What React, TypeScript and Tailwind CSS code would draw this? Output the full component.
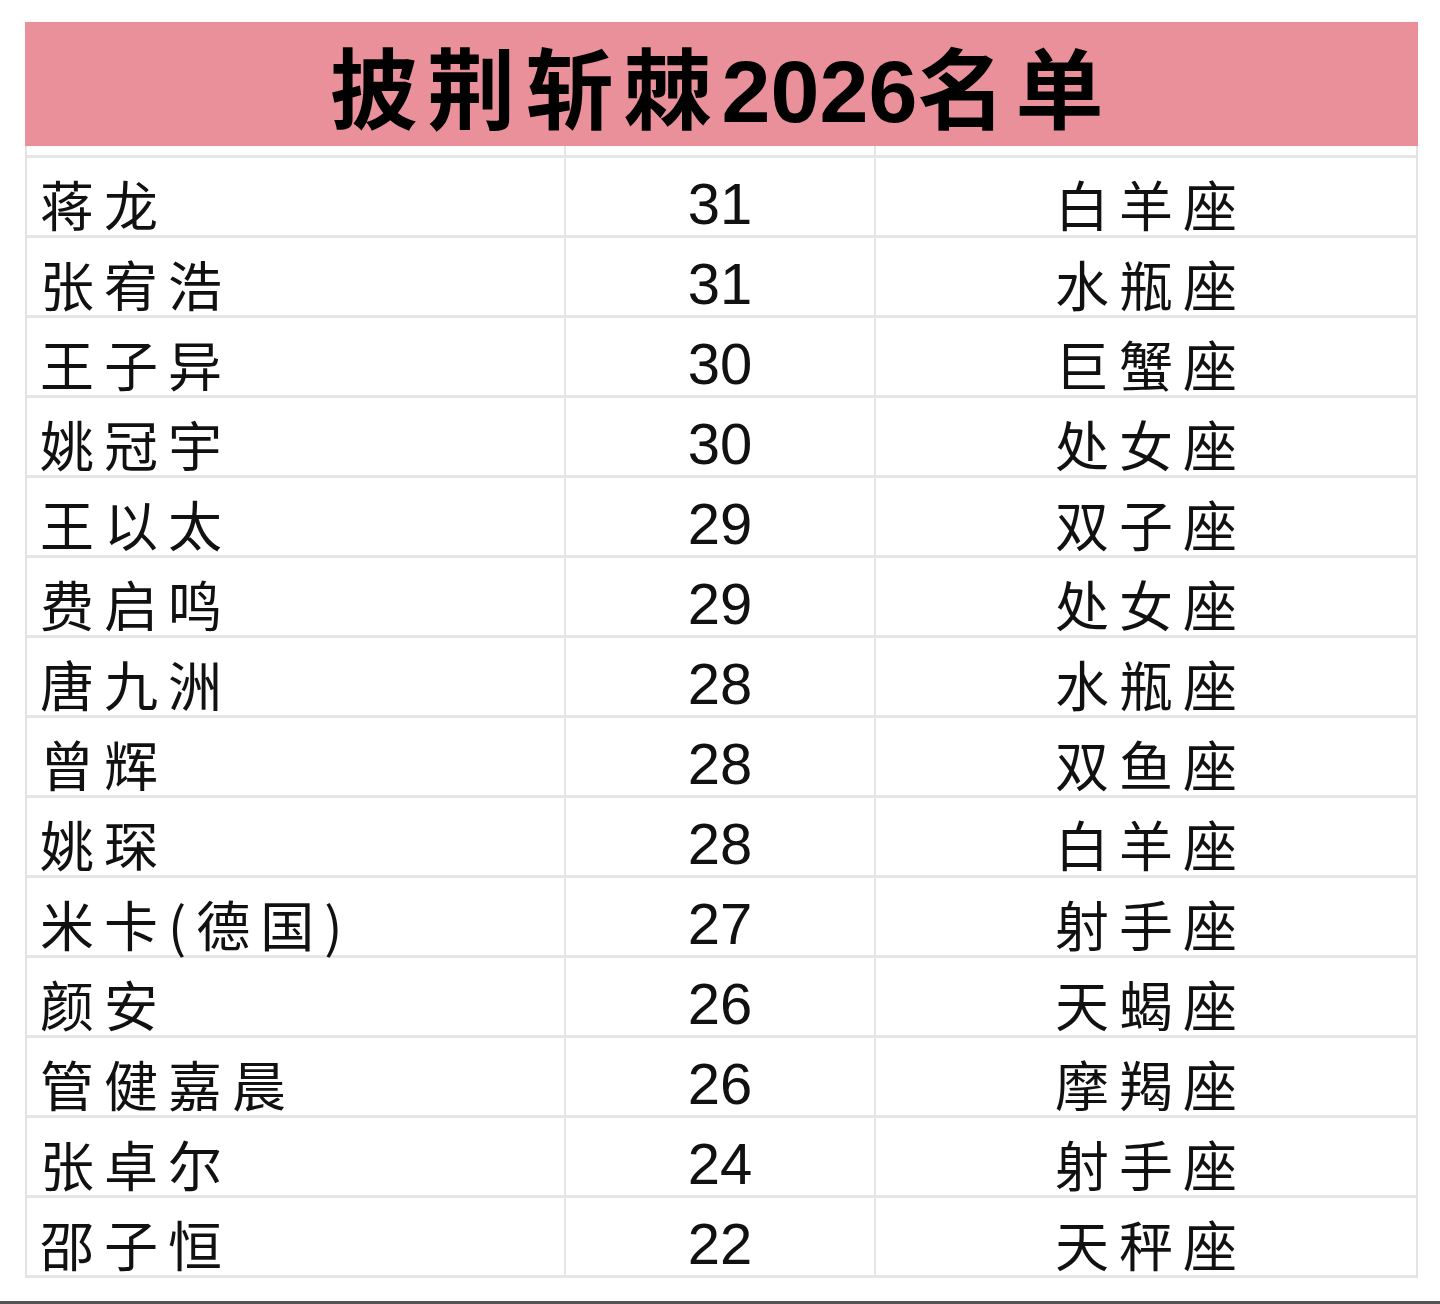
const rows: [string, string, string][] = [
  ['蒋龙', '31', '白羊座'],
  ['张宥浩', '31', '水瓶座'],
  ['王子异', '30', '巨蟹座'],
  ['姚冠宇', '30', '处女座'],
  ['王以太', '29', '双子座'],
  ['费启鸣', '29', '处女座'],
  ['唐九洲', '28', '水瓶座'],
  ['曾辉', '28', '双鱼座'],
  ['姚琛', '28', '白羊座'],
  ['米卡(德国)', '27', '射手座'],
  ['颜安', '26', '天蝎座'],
  ['管健嘉晨', '26', '摩羯座'],
  ['张卓尔', '24', '射手座'],
  ['邵子恒', '22', '天秤座'],
];

const cjk = "font-['KaiTi','STKaiti','Noto_Sans_CJK_SC',sans-serif]";

export default function App() {
  return (
    <div className="w-[1440px] h-[1304px] bg-white flex flex-col">
      <div className="pt-[22px] pl-[25px] flex-1">
        <div className="w-[1393px] border-l-2 border-r-2 border-[#e3e3e3]">
          <div className="h-[124px] bg-[#e9909b] flex items-center justify-center -mx-[2px]">
            <h1
              className={`${cjk} text-[88px] font-bold text-black tracking-[10px] leading-[100px] pt-[8px]`}
            >
              披荆斩棘<span className="font-['Liberation_Sans',sans-serif] tracking-[0px]">2026</span>名单
            </h1>
          </div>
          <div className="grid grid-cols-[539px_310px_540px] h-[12px] border-b-[3px] border-[#e6e6e6]">
            <div className="border-r-2 border-[#e6e6e6]" />
            <div className="border-r-2 border-[#e6e6e6]" />
            <div />
          </div>
          {rows.map(([name, age, sign], i) => (
            <div
              key={i}
              className="grid grid-cols-[539px_310px_540px] grid-rows-[77px] h-[80px] border-b-[3px] border-[#e6e6e6]"
            >
              <div
                className={`${cjk} border-r-2 border-[#e6e6e6] flex items-center pl-[13px] pt-[14px] text-[54px] leading-[60px] tracking-[10px] text-[#111] whitespace-nowrap`}
              >
                {name}
              </div>
              <div className="border-r-2 border-[#e6e6e6] flex items-center justify-center pt-[15px] font-['Liberation_Sans',sans-serif] text-[58px] leading-[62px] text-[#111]">
                {age}
              </div>
              <div
                className={`${cjk} flex items-center justify-center pt-[14px] pl-[10px] text-[54px] leading-[60px] tracking-[10px] text-[#111]`}
              >
                {sign}
              </div>
            </div>
          ))}
        </div>
      </div>
      <div className="h-[3px] bg-[#555555]" />
    </div>
  );
}
